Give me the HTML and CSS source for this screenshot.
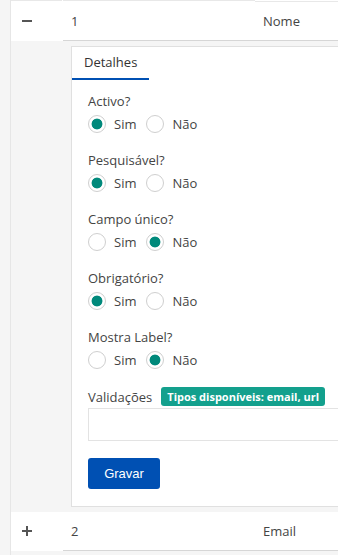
FILE: index.html
```html
<!DOCTYPE html>
<html lang="pt">
<head>
<meta charset="utf-8">
<link rel="stylesheet" href="styles.css">
</head>
<body>
<div class="table">
  <div class="row head">
    <div class="cell tog"></div>
    <div class="cell id"></div>
    <div class="cell name"></div>
  </div>
  <div class="row">
    <div class="cell tog">
      <svg width="10" height="10" viewBox="0 0 10 10"><path d="M0 5H10" stroke="#555" stroke-width="2"/></svg>
    </div>
    <div class="cell id">1</div>
    <div class="cell name">Nome</div>
  </div>
  <div class="expand">
    <div class="panel">
      <div class="tabs"><div class="tab active">Detalhes</div></div>
      <form class="form">
        <div class="group">
          <div class="label">Activo?</div>
          <div class="radios">
            <label class="opt"><span class="radio checked"></span>Sim</label>
            <label class="opt"><span class="radio"></span>Não</label>
          </div>
        </div>
        <div class="group">
          <div class="label">Pesquisável?</div>
          <div class="radios">
            <label class="opt"><span class="radio checked"></span>Sim</label>
            <label class="opt"><span class="radio"></span>Não</label>
          </div>
        </div>
        <div class="group">
          <div class="label">Campo único?</div>
          <div class="radios">
            <label class="opt"><span class="radio"></span>Sim</label>
            <label class="opt"><span class="radio checked"></span>Não</label>
          </div>
        </div>
        <div class="group">
          <div class="label">Obrigatório?</div>
          <div class="radios">
            <label class="opt"><span class="radio checked"></span>Sim</label>
            <label class="opt"><span class="radio"></span>Não</label>
          </div>
        </div>
        <div class="group">
          <div class="label">Mostra Label?</div>
          <div class="radios">
            <label class="opt"><span class="radio"></span>Sim</label>
            <label class="opt"><span class="radio checked"></span>Não</label>
          </div>
        </div>
        <div class="vrow">
          <span class="vlabel">Validações</span>
          <span class="badge">Tipos disponíveis: email, url</span>
        </div>
        <div class="input"></div>
        <button type="button" class="btn">Gravar</button>
      </form>
    </div>
  </div>
  <div class="row">
    <div class="cell tog">
      <svg width="10" height="10" viewBox="0 0 10 10"><path d="M0 5H10M5 0V10" stroke="#555" stroke-width="2"/></svg>
    </div>
    <div class="cell id">2</div>
    <div class="cell name">Email</div>
  </div>
</div>
</body>
</html>
```

FILE: styles.css
```css
html, body {
  margin: 0;
  padding: 0;
}
body {
  background: #f5f5f5;
  overflow: hidden;
  font-family: "Open Sans", "Liberation Sans", sans-serif;
  font-size: 13px;
  color: #444;
}
.table {
  margin-left: 10px;
  border-left: 1px solid #e6e6e6;
  width: 700px;
  min-height: 555px;
}
.row {
  display: grid;
  grid-template-columns: 52px 192px 1fr;
  background: #fff;
}
.cell {
  height: 38px;
  display: flex;
  align-items: center;
  padding-left: 8px;
  border-bottom: 1px solid #d6d6d6;
}
.cell.tog {
  border-bottom-color: #fff;
  padding-left: 11px;
}
.head .cell {
  height: 1px;
  border-bottom: 1px solid #e8e8e8;
}
.head .cell.tog, .head .cell.id {
  border-right: 1px solid #e8e8e8;
}
.head .cell.tog { width: 51px; box-sizing: border-box; }
.head .cell.id { box-sizing: border-box; }
.expand {
  background: #f5f5f5;
  padding: 5px 0 5px 60px;
}
.panel {
  background: #fff;
  border: 1px solid #e0e0e0;
  width: 600px;
}
.tabs {
  display: flex;
}
.tab {
  padding: 0 12px;
  height: 31px;
  line-height: 31px;
  color: #333;
  border-bottom: 2px solid transparent;
}
.tab.active {
  border-bottom-color: #0050b3;
}
.form {
  padding: 12px 16px 17px;
  margin: 0;
}
.group {
  margin-bottom: 18px;
}
.label {
  line-height: 18px;
  color: #444;
  margin-bottom: 5px;
}
.radios {
  display: flex;
  height: 18px;
  align-items: center;
}
.opt {
  display: flex;
  align-items: center;
  margin-right: 10px;
  color: #444;
}
.radio {
  width: 18px;
  height: 18px;
  box-sizing: border-box;
  border: 1px solid #cfcfcf;
  border-radius: 50%;
  background: #fff;
  margin-right: 8px;
}
.radio.checked {
  background: radial-gradient(circle, #00897b 0, #00897b 5px, #fff 5.8px);
}
.vrow {
  display: flex;
  align-items: center;
  height: 19px;
}
.vlabel {
  margin-right: 9px;
  color: #444;
}
.badge {
  background: #13a08d;
  color: #fff;
  font-weight: 700;
  font-size: 11px;
  height: 19px;
  line-height: 19px;
  padding: 0 6px;
  border-radius: 3px;
}
.input {
  margin-top: 2px;
  height: 31px;
  width: 520px;
  border: 1px solid #e3e3e3;
}
.btn {
  display: block;
  margin-top: 17px;
  width: 72px;
  height: 31px;
  border: none;
  border-radius: 3px;
  background: #0050b3;
  color: #fff;
  font-family: "Liberation Sans", Arial, sans-serif;
  font-size: 13px;
  padding: 0;
}
```
